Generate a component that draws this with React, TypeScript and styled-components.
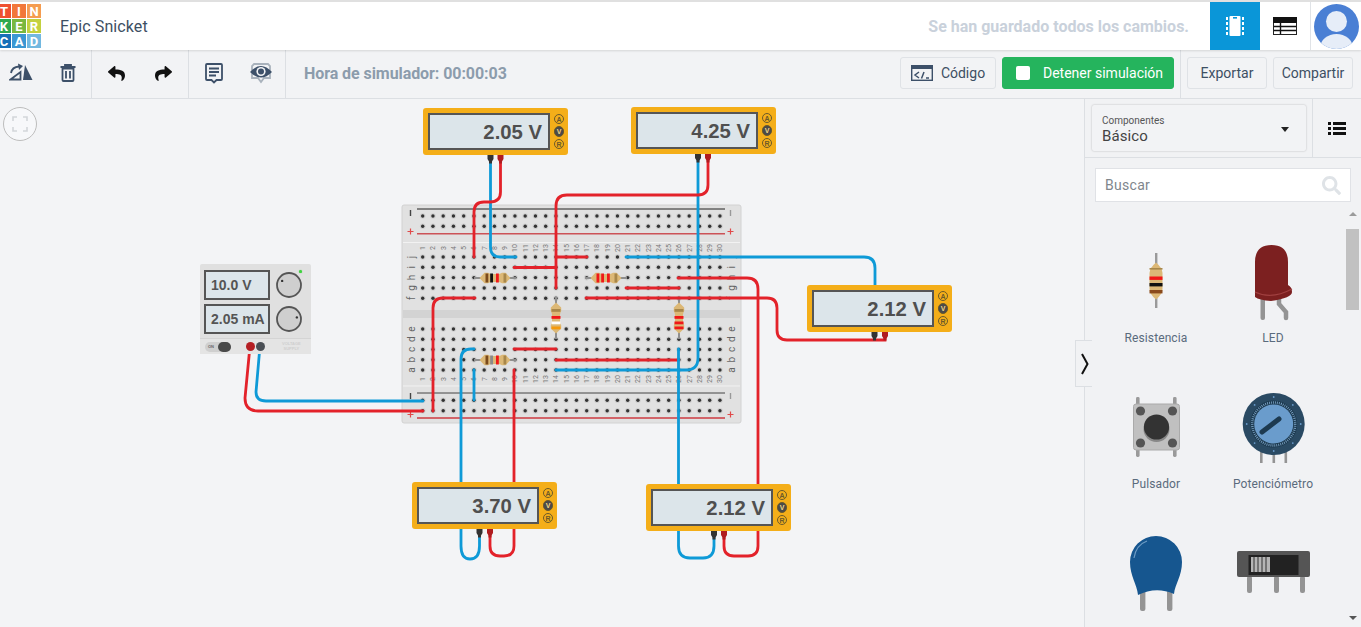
import React from 'react';
import styled, { createGlobalStyle } from 'styled-components';
import { FaReply, FaShare, FaSearch } from 'react-icons/fa';

const GlobalStyle = createGlobalStyle`
	html, body {
		margin: 0;
		height: 100%;
		overflow: hidden;
		background: #f3f4f6;
		font-family: Roboto, 'Liberation Sans', sans-serif;
	}
	* {
		box-sizing: border-box;
	}
`;

const Page = styled.div`
	display: flex;
	flex-direction: column;
	width: 1361px;
	height: 627px;
	overflow: hidden;
`;

/* top bar */
const Header = styled.header`
	position: relative;
	z-index: 2;
	display: flex;
	align-items: stretch;
	flex: 0 0 50px;
	background: #fff;
	border-top: 2px solid #e0e0e0;
	box-shadow: 0 1px 2px rgba(0, 0, 0, 0.12);
`;
const Logo = styled.div`
	display: grid;
	grid-template-columns: repeat(3, 14px);
	grid-template-rows: repeat(3, 14px);
	gap: 1px;
	margin: 2px 0 0 -3px;
`;
const Tile = styled.span<{ $bg: string }>`
	display: flex;
	align-items: center;
	justify-content: center;
	background: ${({ $bg }) => $bg};
	color: #fff;
	font-size: 13px;
	font-weight: 700;
	line-height: 1;
`;
const Title = styled.h1`
	align-self: center;
	margin: 0 0 0 19px;
	color: #3d4f63;
	font-size: 16px;
	font-weight: 400;
	letter-spacing: 0.1px;
`;
const Saved = styled.span`
	align-self: center;
	margin: 0 21px 0 auto;
	color: #c9d1db;
	font-size: 16px;
	font-weight: 700;
`;
const ViewTab = styled.div<{ $active?: boolean }>`
	display: flex;
	align-items: center;
	justify-content: center;
	width: 50px;
	background: ${({ $active }) => ($active ? '#0a96d8' : '#fff')};
`;
const AvatarCell = styled.div`
	display: flex;
	align-items: center;
	justify-content: center;
	width: 51px;
	border-left: 1px solid #e0e3e7;
`;

/* second bar */
const Toolbar = styled.div`
	display: flex;
	align-items: stretch;
	flex: 0 0 49px;
	background: #f2f3f5;
	border-bottom: 1px solid #dcdfe3;
`;
const ToolGroup = styled.div<{ $first?: boolean }>`
	display: flex;
	align-items: center;
	justify-content: ${({ $first }) => ($first ? 'flex-end' : 'center')};
	width: ${({ $first }) => ($first ? '92px' : '97px')};
	border-right: 1px solid #dcdfe3;
`;
const ToolButton = styled.div`
	display: flex;
	align-items: center;
	justify-content: center;
	flex: 0 0 47px;
	height: 100%;
	padding-bottom: 2px;
`;
const SimTime = styled.span`
	align-self: center;
	margin: 0 auto 0 18px;
	padding-bottom: 1px;
	color: #8c9cac;
	font-size: 16px;
	font-weight: 700;
	letter-spacing: -0.07px;
`;
const ActionButton = styled.button<{ $width: number }>`
	display: flex;
	align-items: center;
	justify-content: center;
	gap: 8px;
	align-self: center;
	width: ${({ $width }) => $width}px;
	height: 32px;
	margin: 0 0 2px 6px;
	padding: 0;
	background: #f2f3f5;
	border: 1px solid #dfe2e6;
	border-radius: 3px;
	color: #3d4f63;
	font: 400 14px Roboto, sans-serif;
`;
const RunButton = styled(ActionButton)`
	justify-content: flex-start;
	gap: 13px;
	padding-left: 13px;
	background: #25b45d;
	border-color: #25b45d;
	color: #fff;
`;
const StopMark = styled.i`
	width: 14px;
	height: 14px;
	background: #fff;
	border-radius: 2px;
`;
const ActionDivider = styled.div`
	width: 1px;
	margin-left: 6px;
	background: #dcdfe3;
`;
const ExportGroup = styled.div`
	display: flex;
	align-items: stretch;
	padding-right: 8px;
`;

/* work area */
const Body = styled.div`
	display: flex;
	flex: 1;
	min-height: 0;
`;
const Canvas = styled.main`
	position: relative;
	flex: 0 0 1084px;
	background: #f3f4f6;
	overflow: hidden;
`;
const FitButton = styled.div`
	position: absolute;
	left: 3px;
	top: 8px;
	display: flex;
	align-items: center;
	justify-content: center;
	width: 34px;
	height: 34px;
	background: #f7f8fa;
	border: 1px solid #bdbdbd;
	border-radius: 50%;
`;
const CircuitSvg = styled.svg`
	position: absolute;
	left: 0;
	top: 0;
`;

const MeterBox = styled.div<{ $x: number; $y: number }>`
	position: absolute;
	left: ${({ $x }) => $x}px;
	top: ${({ $y }) => $y - 99}px;
	display: flex;
	width: 145px;
	height: 47px;
	padding: 5px 0 5px 5px;
	background: #f4ae19;
	border-radius: 3px;
`;
const MeterScreen = styled.div`
	flex: 0 0 122px;
	padding-right: 6px;
	background: #dce5ea;
	border: 2px solid #555;
	color: #4f4f4f;
	font: 700 20.3px/35px 'Liberation Sans', sans-serif;
	text-align: right;
`;
const MeterKeys = styled.div`
	display: flex;
	flex-direction: column;
	align-items: center;
	justify-content: center;
	gap: 2px;
	flex: 1;
`;
const MeterKey = styled.span<{ $on?: boolean }>`
	display: flex;
	align-items: center;
	justify-content: center;
	width: 10.5px;
	height: 10.5px;
	background: ${({ $on }) => ($on ? '#4a4a4a' : 'transparent')};
	border: 1px solid #6b5a2a;
	border-radius: 50%;
	color: ${({ $on }) => ($on ? '#f4d98a' : '#6b5a2a')};
	font: 700 7px 'Liberation Sans', sans-serif;
`;

const Supply = styled.div`
	position: absolute;
	left: 200px;
	top: 165px;
	display: flex;
	flex-direction: column;
	width: 111px;
	height: 90px;
	background: #e0e0e0;
	border-radius: 2px;
`;
const SupplyTop = styled.div`
	display: grid;
	grid-template-columns: 66px 30px;
	gap: 4px 4px;
	padding: 6px 0 0 4px;
`;
const SupplyScreen = styled.div`
	height: 30px;
	padding-left: 5px;
	background: #dce5ea;
	border: 2px solid #555;
	color: #555;
	font: 700 14px/26px 'Liberation Sans', sans-serif;
	white-space: nowrap;
`;
const PowerLed = styled.span`
	position: absolute;
	left: 99px;
	top: 6px;
	width: 3px;
	height: 3px;
	background: #3ed23e;
	border-radius: 50%;
	box-shadow: 0 0 1px #3ed23e;
`;
const SupplyFoot = styled.div`
	display: flex;
	align-items: center;
	height: 16px;
	margin-top: 4px;
	padding-left: 5px;
	background: #e4e4e4;
	border-top: 1px solid #d4d4d4;
`;
const PowerSwitch = styled.div`
	display: flex;
	align-items: center;
	justify-content: space-between;
	width: 26px;
	height: 10px;
	padding-left: 3px;
	background: #cfcfcf;
	border-radius: 5px;
	color: #666;
	font: 700 4px 'Liberation Sans', sans-serif;
	&::after {
		content: '';
		width: 13px;
		height: 10px;
		background: #4a4a4a;
		border-radius: 5px;
	}
`;
const Terminal = styled.span<{ $red?: boolean }>`
	width: 9px;
	height: 9px;
	margin-left: ${({ $red }) => ($red ? '15px' : '1px')};
	background: ${({ $red }) => ($red ? '#b51f24' : '#4a4f55')};
	border-radius: 50%;
`;
const SupplyBrand = styled.span`
	margin-left: 17px;
	color: #cfcfcf;
	font: 700 4px/4.5px 'Liberation Sans', sans-serif;
	text-align: center;
`;

/* side panel */
const Sidebar = styled.aside`
	position: relative;
	display: flex;
	flex-direction: column;
	flex: 1;
	min-width: 0;
	background: #f1f2f4;
	border-left: 1px solid #dcdfe3;
`;
const Collapse = styled.div`
	position: absolute;
	left: -10px;
	top: 241px;
	display: flex;
	align-items: center;
	width: 17px;
	height: 47px;
	padding-left: 5px;
	background: #f1f2f4;
	border: 1px solid #dcdfe3;
	border-right: 0;
`;
const PanelTop = styled.div`
	display: flex;
	flex: 0 0 59px;
	border-bottom: 1px solid #dcdfe3;
`;
const Select = styled.div`
	position: relative;
	width: 214px;
	height: 46px;
	margin: 6px 0 0 7px;
	padding: 10px 10px 0;
	background: #f2f3f5;
	border-radius: 2px;
	box-shadow: 0 0 2px rgba(0, 0, 0, 0.25);
	&::after {
		content: '';
		position: absolute;
		right: 17px;
		top: 22px;
		border: 4px solid transparent;
		border-top: 5px solid #222;
		border-bottom: 0;
	}
`;
const SelectLabel = styled.div`
	color: #555;
	font-size: 10px;
	line-height: 12px;
`;
const SelectValue = styled.div`
	color: #444;
	font-size: 15px;
	letter-spacing: 0.1px;
	line-height: 18px;
`;
const ListToggle = styled.div`
	display: flex;
	align-items: center;
	justify-content: center;
	width: 49px;
	margin-left: 6px;
	border-left: 1px solid #dcdfe3;
`;
const Search = styled.div`
	display: flex;
	align-items: center;
	justify-content: space-between;
	flex: 0 0 34px;
	width: 256px;
	margin: 10px 0 0 10px;
	padding: 0 9px;
	background: #fff;
	border: 1px solid #e0e2e6;
	color: #80868c;
	font-size: 14px;
	letter-spacing: 0.3px;
`;
const Parts = styled.div`
	display: grid;
	grid-template-columns: repeat(2, 117px);
	grid-auto-rows: 146px;
	flex: 0 0 auto;
	margin-top: 46px;
	padding-left: 12.5px;
`;
const Part = styled.div`
	display: flex;
	flex-direction: column;
	align-items: center;
`;
const PartIcon = styled.svg`
	flex: 0 0 82px;
	overflow: visible;
`;
const PartName = styled.span`
	color: #5a6b7d;
	font-size: 12px;
	letter-spacing: 0.1px;
	line-height: 16px;
`;
const Scrollbar = styled.div`
	position: absolute;
	right: 2px;
	top: 113px;
	bottom: 7px;
	display: flex;
	flex-direction: column;
	align-items: center;
	justify-content: space-between;
	width: 13px;
`;
const ScrollArrow = styled.i<{ $up?: boolean }>`
	border: 4px solid transparent;
	${({ $up }) =>
		$up ? 'border-bottom: 4px solid #9b9b9b; border-top: 0;' : 'border-top: 4px solid #555; border-bottom: 0;'}
`;
const ScrollThumb = styled.div`
	position: absolute;
	left: 0;
	top: 17px;
	width: 13px;
	height: 81px;
	background: #c1c1c1;
`;

const ink = '#3d5069';
const RED = '#e3222a';
const BLUE = '#0e9ad7';
const GOLD = '#a8874a';
const BAND_RED = '#f01818';

const tiles: Array<[string, string]> = [
	['T', '#ef5030'],
	['I', '#f2773a'],
	['N', '#f59c50'],
	['K', '#2fa84f'],
	['E', '#79b83f'],
	['R', '#c3d13f'],
	['C', '#1670b8'],
	['A', '#3b97d3'],
	['D', '#72b8e0'],
];

const wires: Array<{ c: string; d: string }> = [
	// fuente
	{ c: RED, d: 'M250,346 L245,398 Q245,411 258,411 H423' },
	{ c: BLUE, d: 'M260,346 L256,392 Q256,401 266,401 H423' },
	// medidor 1
	{ c: BLUE, d: 'M490.5,160 V247 Q490.5,257 500,257 H516' },
	{ c: RED, d: 'M474,257 V212 Q474,202 484,202 H490 Q500.5,202 500.5,192 V160' },
	// medidor 2
	{ c: BLUE, d: 'M698,160 V358 Q698,370 686,370 H556' },
	{ c: RED, d: 'M556,288 V206 Q556,195 567,195 H698 Q708,195 708,185 V160' },
	// puentes
	{ c: RED, d: 'M475,298 H443 Q433,298 433,308 V411' },
	{ c: RED, d: 'M556,257 H587' },
	{ c: RED, d: 'M514,267.5 H556' },
	{ c: RED, d: 'M626,288 H679' },
	{ c: RED, d: 'M514,349 H556' },
	{ c: RED, d: 'M556,360 H678' },
	{ c: BLUE, d: 'M474,370 V400' },
	// medidor derecho
	{ c: BLUE, d: 'M626,257 H864 Q875,257 875,268 V336' },
	{ c: RED, d: 'M586,298 H767 Q777,298 777,308 V330 Q777,340 787,340 H885 V335' },
	{ c: RED, d: 'M678,278 H747 Q758,278 758,289 V546 Q758,556 748,556 H734 Q724,556 724,546 V536' },
	// medidores inferiores
	{ c: BLUE, d: 'M474,349 H471 Q461,349 461,359 V546 Q461,559 470,559 Q479.5,559 479.5,546 V534' },
	{ c: RED, d: 'M514,370 V546 Q514,556 504,556 H500 Q490,556 490,546 V534' },
	{ c: BLUE, d: 'M678.5,349 V546 Q678.5,558 690,558 H703 Q714,558 714,546 V536' },
];

const probes: Array<[number, number]> = [
	[490.5, 155],
	[500.5, 155],
	[698, 154],
	[708, 154],
	[874.5, 332],
	[885, 332],
	[479.5, 529],
	[490, 529],
	[714, 531],
	[724, 531],
];

const meters = [
	{ x: 423, y: 108, value: '2.05 V' },
	{ x: 631, y: 107, value: '4.25 V' },
	{ x: 807, y: 285, value: '2.12 V' },
	{ x: 412, y: 482, value: '3.70 V' },
	{ x: 646, y: 484, value: '2.12 V' },
];

const COLS = Array.from({ length: 30 }, (_, i) => 422.7 + i * 10.25);
const HOLE_ROWS = [216, 226.3, 257, 267.3, 277.6, 288, 298.2, 329, 339.2, 349.5, 359.7, 370, 400.3, 410.7];
const LETTERS: Array<[string, number]> = [
	['j', 257],
	['i', 267.3],
	['h', 277.6],
	['g', 288],
	['f', 298.2],
	['e', 329],
	['d', 339.2],
	['c', 349.5],
	['b', 359.7],
	['a', 370],
];

const BAND_POS = [-9.5, -4.8, 1, 8.5];
const BAND_POS_V = [-9, -2, 3.5, 8.5];

const Resistor = ({
	x,
	y,
	bands,
	vertical,
}: {
	x: number;
	y: number;
	bands: string[];
	vertical?: boolean;
}) => (
	<g transform={`translate(${x} ${y})${vertical ? ' rotate(90)' : ''}`}>
		<line x1={-21} x2={21} stroke="#8f8f8f" strokeWidth={2} />
		<path
			d="M-15.5,0 L-10.5,-5.2 H-7 Q-5,-4 -3,-4 H3 Q5,-4 7,-5.2 H10.5 L15.5,0 L10.5,5.2 H7 Q5,4 3,4 H-3 Q-5,4 -7,5.2 H-10.5 Z"
			fill="#dcb876"
		/>
		{bands.map((b, i) => (
			<rect
				key={i}
				x={(vertical ? BAND_POS_V : BAND_POS)[i]}
				y={-4.5}
				width={2.8}
				height={9}
				fill={b}
			/>
		))}
	</g>
);

const Breadboard = () => (
	<g>
		<rect x={402} y={205} width={339} height={218} rx={2} fill="#e1e1e1" stroke="#d2d2d2" />
		<rect x={403} y={310} width={337} height={8} fill="#d3d3d3" />
		<line x1={403} x2={740} y1={242.5} y2={242.5} stroke="#f2f2f2" />
		<line x1={403} x2={740} y1={386} y2={386} stroke="#f2f2f2" />
		<line x1={417} x2={725} y1={209} y2={209} stroke="#222" />
		<line x1={417} x2={725} y1={233.7} y2={233.7} stroke="#cc5257" strokeWidth={1.4} />
		<line x1={417} x2={725} y1={393} y2={393} stroke="#444" />
		<line x1={417} x2={725} y1={418} y2={418} stroke="#cc3a40" strokeWidth={1.4} />
		{[
			[410.5, 213, '#444'],
			[730.5, 213, '#999'],
			[410.5, 396, '#444'],
			[730.5, 396, '#999'],
		].map(([x, y, c], i) => (
			<rect key={i} x={(x as number) - 0.7} y={(y as number) - 3} width={1.4} height={6} fill={c as string} />
		))}
		{[
			[410.5, 231.5],
			[730.5, 231.5],
			[410.5, 414.5],
			[730.5, 414.5],
		].map(([x, y], i) => (
			<path key={i} d={`M${x - 3},${y} h6 M${x},${y - 3} v6`} stroke="#e04a4a" strokeWidth={1.2} />
		))}
		{HOLE_ROWS.map((y) =>
			COLS.map((x) => (
				<g key={`${x}-${y}`}>
					<circle cx={x} cy={y} r={2.8} fill="#cfcfcf" />
					<circle cx={x} cy={y} r={1.7} fill="#333" />
				</g>
			)),
		)}
		{COLS.map((x, i) => (
			<g key={i} fill="#777" fontSize={7} fontFamily="Roboto, sans-serif" textAnchor="middle">
				<text transform={`translate(${x + 2.5} 248) rotate(-90)`}>{i + 1}</text>
				<text transform={`translate(${x + 2.5} 379) rotate(-90)`}>{i + 1}</text>
			</g>
		))}
		{LETTERS.map(([l, y]) => (
			<g key={l} fill="#666" fontSize={10} fontFamily="Roboto, sans-serif" textAnchor="middle">
				<text transform={`translate(414.5 ${y}) rotate(-90)`}>{l}</text>
				<text transform={`translate(734.5 ${y}) rotate(-90)`}>{l}</text>
			</g>
		))}
	</g>
);

const Knob = ({ angle }: { angle: number }) => (
	<svg width={30} height={30} viewBox="-15 -15 30 30">
		<circle r={12} fill="#cfcfcf" stroke="#555" strokeWidth={1.8} />
		<circle r={1.2} cx={8 * Math.cos(angle)} cy={8 * Math.sin(angle)} fill="#333" />
	</svg>
);

const App = () => (
	<Page>
		<GlobalStyle />
		<Header>
			<Logo>
				{tiles.map(([l, c]) => (
					<Tile key={l} $bg={c}>
						{l}
					</Tile>
				))}
			</Logo>
			<Title>Epic Snicket</Title>
			<Saved>Se han guardado todos los cambios.</Saved>
			<ViewTab $active>
				<svg width={20} height={22} viewBox="0 0 20 22" fill="#fff">
					<path d="M5.5,1 h9 a1,1 0 0 1 1,1 v18 a1,1 0 0 1 -1,1 h-9 a1,1 0 0 1 -1,-1 v-18 a1,1 0 0 1 1,-1 Z" />
					<rect x={8} y={2} width={4} height={1.6} fill="#0a96d8" />
					{[3, 8, 13, 18].map((y) => (
						<g key={y}>
							<rect x={1} y={y - 1} width={2} height={3} />
							<rect x={17} y={y - 1} width={2} height={3} />
						</g>
					))}
				</svg>
			</ViewTab>
			<ViewTab>
				<svg width={24} height={18} viewBox="0 0 24 18">
					<rect x={0.5} y={0.5} width={23} height={17} fill="#fff" stroke="#222" />
					<rect x={0} y={0} width={24} height={6} fill="#111" />
					<path d="M1,9.5 H23 M1,13.5 H23 M7.5,6 V17" stroke="#111" strokeWidth={1.4} />
				</svg>
			</ViewTab>
			<AvatarCell>
				<svg width={45} height={45} viewBox="0 0 45 45">
					<defs>
						<clipPath id="avatar">
							<circle cx={22.5} cy={22.5} r={22.5} />
						</clipPath>
					</defs>
					<g clipPath="url(#avatar)">
						<rect width={45} height={45} fill="#4a7fd4" />
						<circle cx={22.5} cy={17.5} r={10.5} fill="#e6edf8" />
						<ellipse cx={22.5} cy={43} rx={16} ry={13} fill="#e6edf8" />
					</g>
				</svg>
			</AvatarCell>
		</Header>
		<Toolbar>
			<ToolGroup $first>
				<ToolButton>
					<svg width={24} height={20} viewBox="0 0 24 20" fill={ink}>
						<path d="M16,2 L23.5,17 H14 Z" />
						<path d="M1.5,16.5 L11.5,9 V16.5 Z" fill="none" stroke={ink} strokeWidth={1.8} />
						<path d="M2,10 Q3,4 10,3.5" fill="none" stroke={ink} strokeWidth={1.8} />
						<path d="M9,0.5 L14,3 L10,7 Z" />
					</svg>
				</ToolButton>
				<ToolButton>
					<svg width={16} height={18} viewBox="0 0 16 18" fill="none" stroke={ink}>
						<path d="M2.5,4.5 H13.5 V16 Q13.5,17 12.5,17 H3.5 Q2.5,17 2.5,16 Z" strokeWidth={1.8} />
						<path d="M0.5,3 H15.5 M5,3 V1 H11 V3" strokeWidth={1.8} />
						<path d="M6,7 V14.5 M10,7 V14.5" strokeWidth={1.8} />
					</svg>
				</ToolButton>
			</ToolGroup>
			<ToolGroup>
				<ToolButton>
					<FaReply size={17} color="#111" />
				</ToolButton>
				<ToolButton>
					<FaShare size={17} color="#111" />
				</ToolButton>
			</ToolGroup>
			<ToolGroup>
				<ToolButton>
					<svg width={18} height={21} viewBox="0 0 18 21" fill="none" stroke={ink} strokeWidth={1.8}>
						<path d="M2,1 H16 Q17,1 17,2 V16 Q17,17 16,17 H11.5 L9,19.5 L6.5,17 H2 Q1,17 1,16 V2 Q1,1 2,1 Z" />
						<path d="M4,5.5 H14 M4,9 H14 M4,12.5 H11" />
					</svg>
				</ToolButton>
				<ToolButton>
					<svg width={22} height={21} viewBox="0 0 22 21">
						<path
							d="M4,1 H18 L20,3 V15 L14,15 L11,19 L8,15 L2,15 V3 Z"
							fill="none"
							stroke="#a9b2bc"
							strokeWidth={1.8}
						/>
						<path d="M0,9 Q11,-3 22,9 Q11,20 0,9 Z" fill={ink} />
						<circle cx={11} cy={8.5} r={4.6} fill="#f2f3f5" />
						<circle cx={11} cy={8.5} r={3} fill={ink} />
					</svg>
				</ToolButton>
			</ToolGroup>
			<SimTime>Hora de simulador: 00:00:03</SimTime>
			<ActionButton $width={96}>
				<svg width={22} height={16} viewBox="0 0 22 16">
					<rect x={0.7} y={0.7} width={20.6} height={14.6} fill="none" stroke={ink} strokeWidth={1.4} />
					<rect x={0} y={0} width={22} height={4} fill={ink} />
					<path d="M8,7 L4,10 L8,13 M13,7 L10.5,13.5 M15,13 H18" fill="none" stroke={ink} strokeWidth={1.5} />
				</svg>
				Código
			</ActionButton>
			<RunButton $width={172}>
				<StopMark />
				Detener simulación
			</RunButton>
			<ActionDivider />
			<ExportGroup>
				<ActionButton $width={80}>Exportar</ActionButton>
				<ActionButton $width={80}>Compartir</ActionButton>
			</ExportGroup>
		</Toolbar>
		<Body>
			<Canvas>
				<CircuitSvg width={1085} height={528} viewBox="0 99 1085 528">
					<Breadboard />
					<Resistor x={495} y={278} bands={['#7a4a1c', '#111', BAND_RED, GOLD]} />
					<Resistor x={606} y={278} bands={[BAND_RED, BAND_RED, BAND_RED, GOLD]} />
					<Resistor x={495} y={360} bands={['#7a4a1c', '#8a8a8a', BAND_RED, GOLD]} />
					<Resistor x={556} y={318} vertical bands={[GOLD, BAND_RED, '#fff', '#f59a0c']} />
					<Resistor x={679} y={318} vertical bands={[GOLD, BAND_RED, BAND_RED, BAND_RED]} />
					{wires.map((w, i) => (
						<path
							key={i}
							d={w.d}
							fill="none"
							stroke={w.c}
							strokeWidth={2.8}
							strokeLinecap="round"
						/>
					))}
					{probes.map(([x, y], i) => (
						<path
							key={i}
							d={`M${x - 3},${y} h6 v4 l-1.5,2.5 v2 h-3 v-2 l-1.5,-2.5 Z`}
							fill={i % 2 ? '#b01c20' : '#333'}
						/>
					))}
				</CircuitSvg>
				<FitButton>
					<svg width={16} height={16} viewBox="0 0 16 16" fill="none" stroke="#d3d6da" strokeWidth={1.6}>
						<path d="M1,5 V1 H5 M11,1 H15 V5 M15,11 V15 H11 M5,15 H1 V11" />
					</svg>
				</FitButton>
				{meters.map((m) => (
					<MeterBox key={`${m.x}-${m.y}`} $x={m.x} $y={m.y}>
						<MeterScreen>{m.value}</MeterScreen>
						<MeterKeys>
							<MeterKey>A</MeterKey>
							<MeterKey $on>V</MeterKey>
							<MeterKey>R</MeterKey>
						</MeterKeys>
					</MeterBox>
				))}
				<Supply>
					<PowerLed />
					<SupplyTop>
						<SupplyScreen>10.0 V</SupplyScreen>
						<Knob angle={-2.6} />
						<SupplyScreen>2.05 mA</SupplyScreen>
						<Knob angle={-0.2} />
					</SupplyTop>
					<SupplyFoot>
						<PowerSwitch>ON</PowerSwitch>
						<Terminal $red />
						<Terminal />
						<SupplyBrand>
							VOLTAGE
							<br />
							SUPPLY
						</SupplyBrand>
					</SupplyFoot>
				</Supply>
			</Canvas>
			<Sidebar>
				<Collapse>
					<svg width={8} height={22} viewBox="0 0 8 22" fill="none" stroke="#111" strokeWidth={2}>
						<path d="M1,1 L6.5,11 L1,21" />
					</svg>
				</Collapse>
				<PanelTop>
					<Select>
						<SelectLabel>Componentes</SelectLabel>
						<SelectValue>Básico</SelectValue>
					</Select>
					<ListToggle>
						<svg width={18} height={13} viewBox="0 0 18 13" fill="#111">
							<rect x={0} y={0} width={3} height={3} />
							<rect x={5} y={0} width={13} height={3} />
							<rect x={0} y={5} width={3} height={3} />
							<rect x={5} y={5} width={13} height={3} />
							<rect x={0} y={10} width={3} height={3} />
							<rect x={5} y={10} width={13} height={3} />
						</svg>
					</ListToggle>
				</PanelTop>
				<Search>
					Buscar
					<FaSearch size={19} color="#dfe3e7" />
				</Search>
				<Parts>
					<Part>
						<PartIcon width={100} height={82} viewBox="0 0 100 82">
							<rect x={49} y={5} width={2.4} height={55} fill="#9a9a9a" />
							<path
								d="M43.5,25 Q43.5,20 50,14.5 Q56.5,20 56.5,25 V41 Q56.5,46 50,51.5 Q43.5,46 43.5,41 Z"
								fill="#dcb876"
							/>
							<rect x={43.5} y={20} width={13} height={1.6} fill={GOLD} />
							<rect x={43.5} y={28.5} width={13} height={3.4} fill={BAND_RED} />
							<rect x={43.5} y={35} width={13} height={3.4} fill="#111" />
							<rect x={43.5} y={42} width={13} height={3.4} fill="#8a4a1c" />
						</PartIcon>
						<PartName>Resistencia</PartName>
					</Part>
					<Part>
						<PartIcon width={100} height={82} viewBox="0 0 100 82">
							<rect x={37.5} y={48} width={4.5} height={24} rx={2} fill="#949494" />
							<path d="M56,48 V56 L63,64 V70" fill="none" stroke="#949494" strokeWidth={4.5} strokeLinecap="round" />
							<path d="M32,49 V14 Q32,-3 48.5,-3 Q65,-3 65,14 V37 Q69,39 69,44 Q69,50 48,53 Q36,52 32,49 Z" fill="#7c2020" />
							<path d="M32,44 Q48,52 69,41" fill="none" stroke="#a04040" strokeWidth={1.2} />
						</PartIcon>
						<PartName>LED</PartName>
					</Part>
					<Part>
						<PartIcon width={100} height={82} viewBox="0 0 100 82">
							<g fill="#9a9a9a">
								<rect x={30} y={3} width={3.6} height={60} rx={1.4} />
								<rect x={67} y={3} width={3.6} height={60} rx={1.4} />
							</g>
							<rect x={27.5} y={10} width={46} height={46} rx={2.5} fill="#c0c0c0" stroke="#aaa" />
							<g fill="#555">
								<circle cx={34.5} cy={17} r={4.6} />
								<circle cx={66.5} cy={17} r={4.6} />
								<circle cx={34.5} cy={49} r={4.6} />
								<circle cx={66.5} cy={49} r={4.6} />
							</g>
							<circle cx={50.5} cy={35} r={13} fill="#888" />
							<circle cx={50.5} cy={33} r={12.6} fill="#333" />
						</PartIcon>
						<PartName>Pulsador</PartName>
					</Part>
					<Part>
						<PartIcon width={100} height={82} viewBox="0 0 100 82">
							<g fill="#949494">
								<rect x={37} y={52} width={2.6} height={17} />
								<rect x={49.5} y={52} width={2.6} height={17} />
								<rect x={61.5} y={52} width={2.6} height={17} />
							</g>
							<circle cx={50.7} cy={30} r={31} fill="#2a4a63" />
							{[0, 1, 2, 3, 4, 5, 6, 7].map((i) => (
								<circle
									key={i}
									cx={50.7 + 27 * Math.cos((i * Math.PI) / 4 + Math.PI / 2)}
									cy={30 - 27 * Math.sin((i * Math.PI) / 4 + Math.PI / 2)}
									r={0.9}
									fill="#6a9ccc"
								/>
							))}
							<circle cx={50.7} cy={30} r={23.5} fill="#1d3a50" />
							<circle
								cx={50.7}
								cy={30}
								r={21.5}
								fill="none"
								stroke="#7ea6c8"
								strokeWidth={2.4}
								strokeDasharray="0.8 1.2"
							/>
							<circle cx={50.7} cy={30} r={19.5} fill="#6a9ccc" />
							<path d="M56,25 L39,38" stroke="#1d3a50" strokeWidth={5} strokeLinecap="round" />
						</PartIcon>
						<PartName>Potenciómetro</PartName>
					</Part>
					<Part>
						<PartIcon width={100} height={82} viewBox="0 0 100 82">
							<g fill="#949494">
								<rect x={34} y={50} width={5.4} height={21} rx={2} />
								<rect x={61} y={50} width={5.4} height={21} rx={2} />
							</g>
							<path
								d="M32,55 C31,44 24,36 24,22 A26,26 0 0 1 76,22 C76,36 69,44 68,54 Q50,46 32,55 Z"
								fill="#16568f"
							/>
							<path d="M28,18 Q30,5 41,1" fill="none" stroke="#6d9bc4" strokeWidth={1.2} />
						</PartIcon>
					</Part>
					<Part>
						<PartIcon width={100} height={82} viewBox="0 0 100 82">
							<g fill="#949494">
								<rect x={24} y={36} width={5} height={17} rx={2} />
								<rect x={51} y={36} width={5} height={17} rx={2} />
								<rect x={77} y={36} width={5} height={17} rx={2} />
							</g>
							<rect x={14} y={11} width={73} height={26} rx={2} fill="#555" />
							<rect x={25.5} y={15} width={50} height={20} fill="#222" />
							<rect x={28} y={17} width={19} height={15} fill="#b5b5b5" />
							<path d="M31,17 V32 M35,17 V32 M39,17 V32 M43,17 V32" stroke="#333" />
						</PartIcon>
					</Part>
				</Parts>
				<Scrollbar>
					<ScrollArrow $up />
					<ScrollThumb />
					<ScrollArrow />
				</Scrollbar>
			</Sidebar>
		</Body>
	</Page>
);

export default App;
